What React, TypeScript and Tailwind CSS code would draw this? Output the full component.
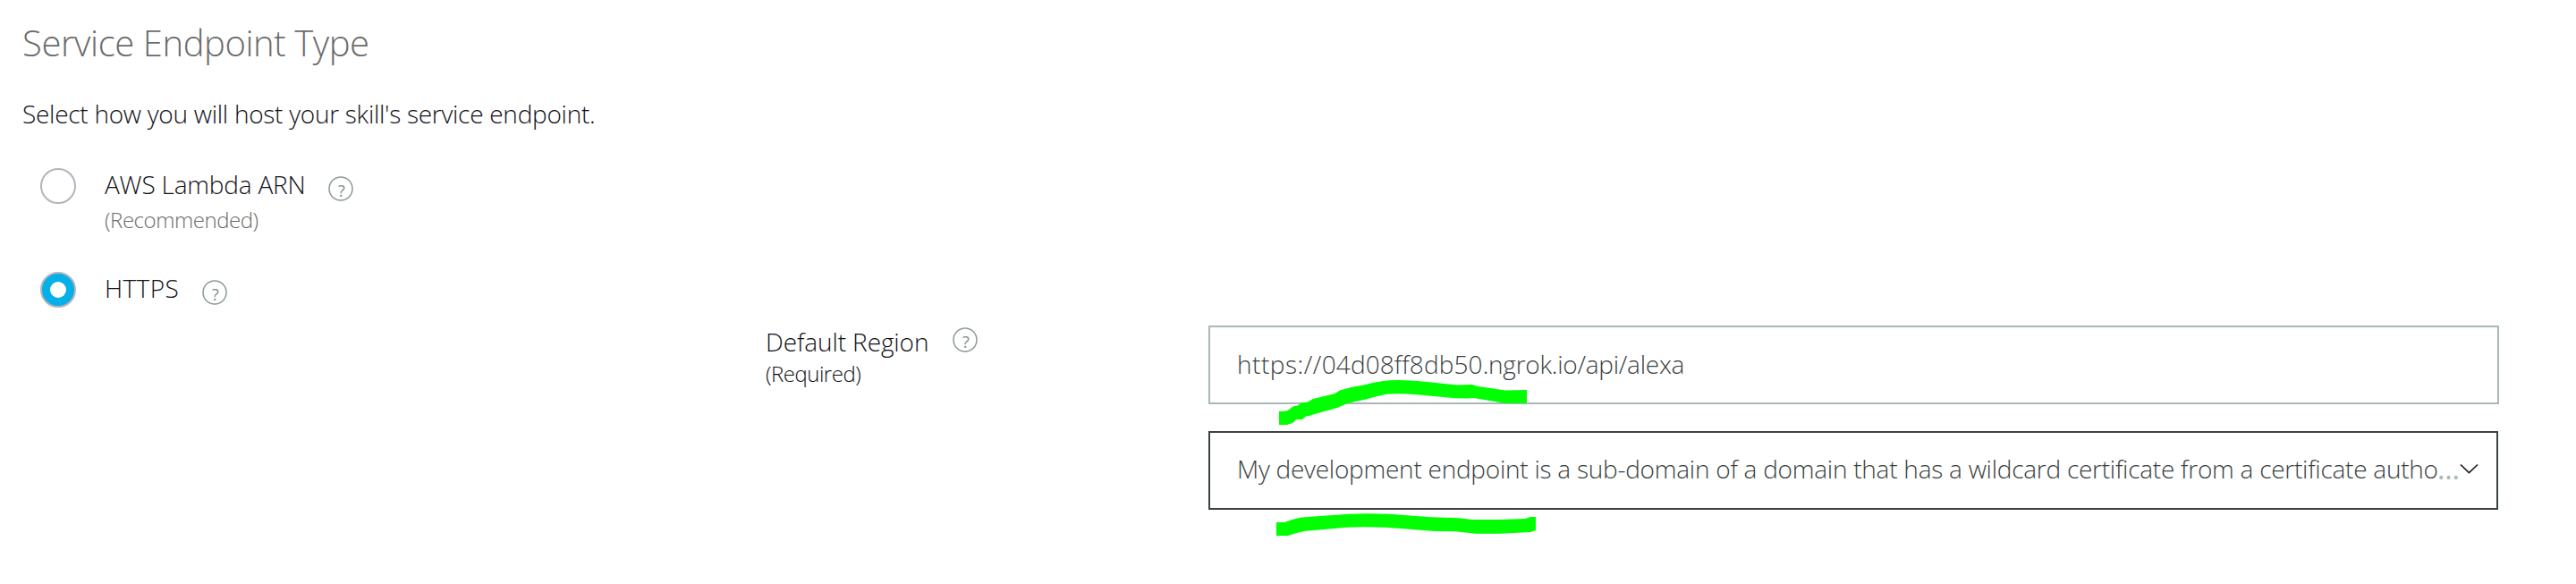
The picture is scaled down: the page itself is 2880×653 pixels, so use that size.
function Help({ className = "" }: { className?: string }) {
  return (
    <span
      className={`relative flex h-7 w-7 shrink-0 items-center justify-center pt-[3px] pl-0.5 text-[18px] leading-none font-normal text-[#7f8b8c] ${className}`}
    >
      <svg className="absolute inset-0" width="28" height="28" fill="none" stroke="#8b9a9a" strokeWidth="1.5">
        <circle cx="14" cy="14" r="13" />
      </svg>
      ?
    </span>
  );
}

function Radio({ checked = false }: { checked?: boolean }) {
  return (
    <span
      className={`mr-8 flex h-10 w-10 shrink-0 items-center justify-center rounded-full border-2 border-[#b4b4bd] ${
        checked ? "bg-[#05b0e8]" : "bg-white"
      }`}
    >
      {checked && <span className="h-[18px] w-[18px] rounded-full bg-white" />}
    </span>
  );
}

export default function App() {
  return (
    <main className="relative h-[653px] w-[2880px] overflow-hidden bg-white pt-6 font-['Open_Sans',sans-serif] text-[28px] leading-9 font-light whitespace-nowrap text-[#111118]">
      <h1 className="pl-[25px] text-[40px] leading-[48px] tracking-[-0.42px] text-[#6b6b6b]">Service Endpoint Type</h1>
      <p className="mt-[37px] pl-[25px] tracking-[-0.27px]">Select how you will host your skill's service endpoint.</p>

      <div className="mt-[43px] flex h-[116px] items-start pl-[45px]">
        <Radio />
        <div className="w-[250px]">
          <div className="tracking-[-0.2px]">AWS Lambda ARN</div>
          <div className="mt-1.5 text-[24px] leading-8 tracking-[-0.45px] text-[#6b6b6b]">(Recommended)</div>
        </div>
        <Help className="mt-[9px]" />
      </div>

      <div className="flex h-[60px] items-start pl-[45px]">
        <Radio checked />
        <div className="w-[109px] tracking-[0.4px]">HTTPS</div>
        <Help className="mt-[9px]" />
      </div>

      <div className="flex items-start pl-[856px]">
        <div className="w-[209px]">
          <div className="tracking-[-0.1px]">Default Region</div>
          <div className="mt-0.5 text-[24px] leading-8 tracking-[-0.5px]">(Required)</div>
        </div>
        <Help className="mt-0.5" />
        <div className="ml-[258px] flex w-[1443px] flex-col gap-[30px] text-[#3a4242]">
          <div className="flex h-[88px] items-center border-2 border-[#a9b7b8] pb-0.5 pl-[30px]">
            <span className="tracking-[0.5px]">https://</span>
            <span className="tracking-[0.1px]">04d08ff8db50</span>
            <span className="tracking-[-0.25px]">.ngrok.io/api/alexa</span>
          </div>
          <div className="mr-px flex h-[88px] items-center border-2 border-[#3a4242] pb-1 pl-[30px]">
            <span className="w-[1341px] tracking-[-0.25px]">
              My development endpoint is a sub-domain of a domain that has a wildcard certificate from a certificate autho
            </span>
            <span className="w-[26px] pl-px text-[32px] font-normal tracking-[1px] text-[#a9b7b8]">…</span>
            <svg className="h-3 w-[21px]" viewBox="0 0 21 12" fill="none" stroke="#1c1c22" strokeWidth="1.7">
              <path d="M1 1.5 10.4 10.5 20 1.5" />
            </svg>
          </div>
        </div>
      </div>

      <svg className="pointer-events-none absolute inset-0" width="2880" height="653" fill="#00ff00">
        <path d="M1430 460 1439 459.5 1446 454.3 1451 453.5 1455 450.3 1462 449.5 1468 446 1492 440.3 1498 436.5 Q1512 432 1527 430 Q1545 425 1563 425 Q1580 425 1600 427.5 L1629 430.5 1646 430 1652 432 Q1667 434 1683 436.5 L1707 436V451H1683Q1665 448 1648 445L1640 445.5 1627 445.3 1600 442.7Q1570 439 1550 440.7Q1538 443 1527 446.5L1507 450.7 1495 456 1468 463.5 1464 465 1460 465.5 1456 469 1449 469.3 1445 473 1439 475H1430Z" />
        <path d="M1427 584H1436Q1449 579 1459 578.3L1508 574.7Q1545 573.5 1570 576L1600 578.3 1631 579.3 1646 581H1677L1705 580 1711 578H1717V593L1711 595 1677 596.7H1650L1627 594.3 1604 594 1570 591.3Q1540 588.5 1505 589.7L1466 593.3Q1454 594 1440 599H1427Z" />
      </svg>
    </main>
  );
}
